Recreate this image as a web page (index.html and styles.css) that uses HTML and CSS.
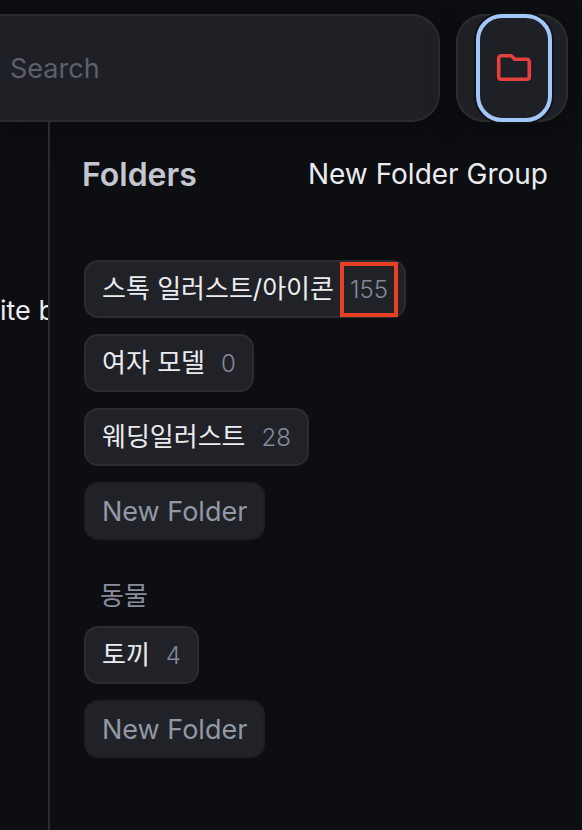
FILE: index.html
```html
<!DOCTYPE html>
<html lang="en">

<head>
  <meta charset="UTF-8">
  <meta name="viewport" content="width=device-width, initial-scale=1.0">
  <title>Folders</title>
  <link rel="stylesheet" href="styles.css">
</head>

<body>
  <header class="topbar">
    <input class="search" type="search" placeholder="Search" aria-label="Search">
    <div class="toolbar">
      <button class="folder-btn" type="button" aria-label="Folders">
        <svg width="36" height="30" viewBox="0 0 36 30" fill="none" stroke="#e5403d" stroke-width="3.6" stroke-linejoin="round">
          <path d="M5.5 2.7H14.4Q15.4 2.7 16 3.4L18.6 6.2H30.5Q33.3 6.2 33.3 9V23.4Q33.3 26.2 30.5 26.2H5.5Q2.7 26.2 2.7 23.4V5.5Q2.7 2.7 5.5 2.7Z" />
        </svg>
      </button>
    </div>
  </header>

  <div class="main">
    <div class="content">
      <p class="content-text">ite b</p>
    </div>

    <aside class="panel">
      <div class="panel-head">
        <h2 class="panel-title">Folders</h2>
        <button class="group-btn" type="button">New Folder Group</button>
      </div>

      <section class="group">
        <button class="folder" type="button">
          <span class="name" lang="ko">스톡 일러스트/아이콘</span>
          <span class="count marked">155</span>
        </button>
        <button class="folder" type="button">
          <span class="name" lang="ko">여자 모델</span>
          <span class="count">0</span>
        </button>
        <button class="folder" type="button">
          <span class="name" lang="ko">웨딩일러스트</span>
          <span class="count">28</span>
        </button>
        <button class="folder new" type="button">New Folder</button>
      </section>

      <section class="group">
        <h3 class="group-title" lang="ko">동물</h3>
        <button class="folder" type="button">
          <span class="name" lang="ko">토끼</span>
          <span class="count">4</span>
        </button>
        <button class="folder new" type="button">New Folder</button>
      </section>
    </aside>
  </div>
</body>

</html>
```
FILE: styles.css
```css
* {
  box-sizing: border-box;
  margin: 0;
  padding: 0;
}

body {
  display: flex;
  flex-direction: column;
  min-height: 100vh;
  background: #0d0e12;
  color: #ebecf0;
  font-family: Inter, "Noto Sans CJK KR", sans-serif;
  font-size: 27px;
}

button,
input {
  font: inherit;
  color: inherit;
}

/* top bar */
.topbar {
  display: flex;
  gap: 16px;
  padding: 14px 14px 0 0;
}

.search {
  flex: 1;
  min-width: 0;
  height: 108px;
  padding: 0 10px;
  background: #1f2025;
  border: 2px solid #2b2c30;
  border-left: 0;
  border-radius: 0 28px 28px 0;
  box-shadow: 0 8px 32px rgba(0, 0, 0, .3);
  outline: none;
  appearance: none;
}

.search::placeholder {
  color: #5c5f6e;
}

.toolbar {
  display: flex;
  padding: 0 16px 0 20px;
  background: #1f2025;
  border-radius: 28px;
  box-shadow: inset 0 0 0 2px #2b2c30, 0 8px 32px rgba(0, 0, 0, .3);
}

.folder-btn {
  display: flex;
  align-items: center;
  justify-content: center;
  width: 76px;
  background: #1f2025;
  border: 4px solid #a3c7fb;
  border-radius: 26px;
  box-shadow: 0 0 0 2px #101115;
}

/* page */
.main {
  display: flex;
  flex: 1;
}

.content {
  width: 48px;
  padding-top: 172px;
  overflow: hidden;
}

.content-text {
  line-height: 34px;
  white-space: nowrap;
}

.panel {
  flex: 1;
  padding: 34px 34px 34px 32px;
  border-left: 2px solid #2b2c30;
}

.panel-head {
  display: flex;
  align-items: center;
  justify-content: space-between;
  height: 36px;
  margin-bottom: 68px;
}

.panel-title {
  color: #c5c7d0;
  font-size: 32px;
  font-weight: 600;
}

.group-btn {
  background: none;
  border: 0;
  font-size: 28px;
}

/* folders */
.group {
  display: flex;
  flex-direction: column;
  align-items: flex-start;
  gap: 16px;
  padding-left: 2px;
  margin-bottom: 36px;
}

.group-title {
  padding-left: 16px;
  margin-bottom: -6px;
  color: #8a8c9e;
  font-size: 26px;
  font-weight: 400;
  line-height: 40px;
}

.folder {
  display: flex;
  align-items: center;
  gap: 16px;
  height: 58px;
  padding: 0 16px;
  background: #212227;
  border: 2px solid #2b2c30;
  border-radius: 14px;
  white-space: nowrap;
}

.folder.new {
  color: #9298a6;
  border-color: #1d1e23;
}

.name {
  font-size: 26px;
  line-height: 40px;
}

.count {
  position: relative;
  color: #85889a;
  font-size: 24px;
  font-weight: 300;
}

/* red frame drawn over the number */
.marked::after {
  content: '';
  position: absolute;
  top: -13px;
  bottom: -13px;
  left: -10px;
  right: -10px;
  border: 4px solid #e94025;
}
```
